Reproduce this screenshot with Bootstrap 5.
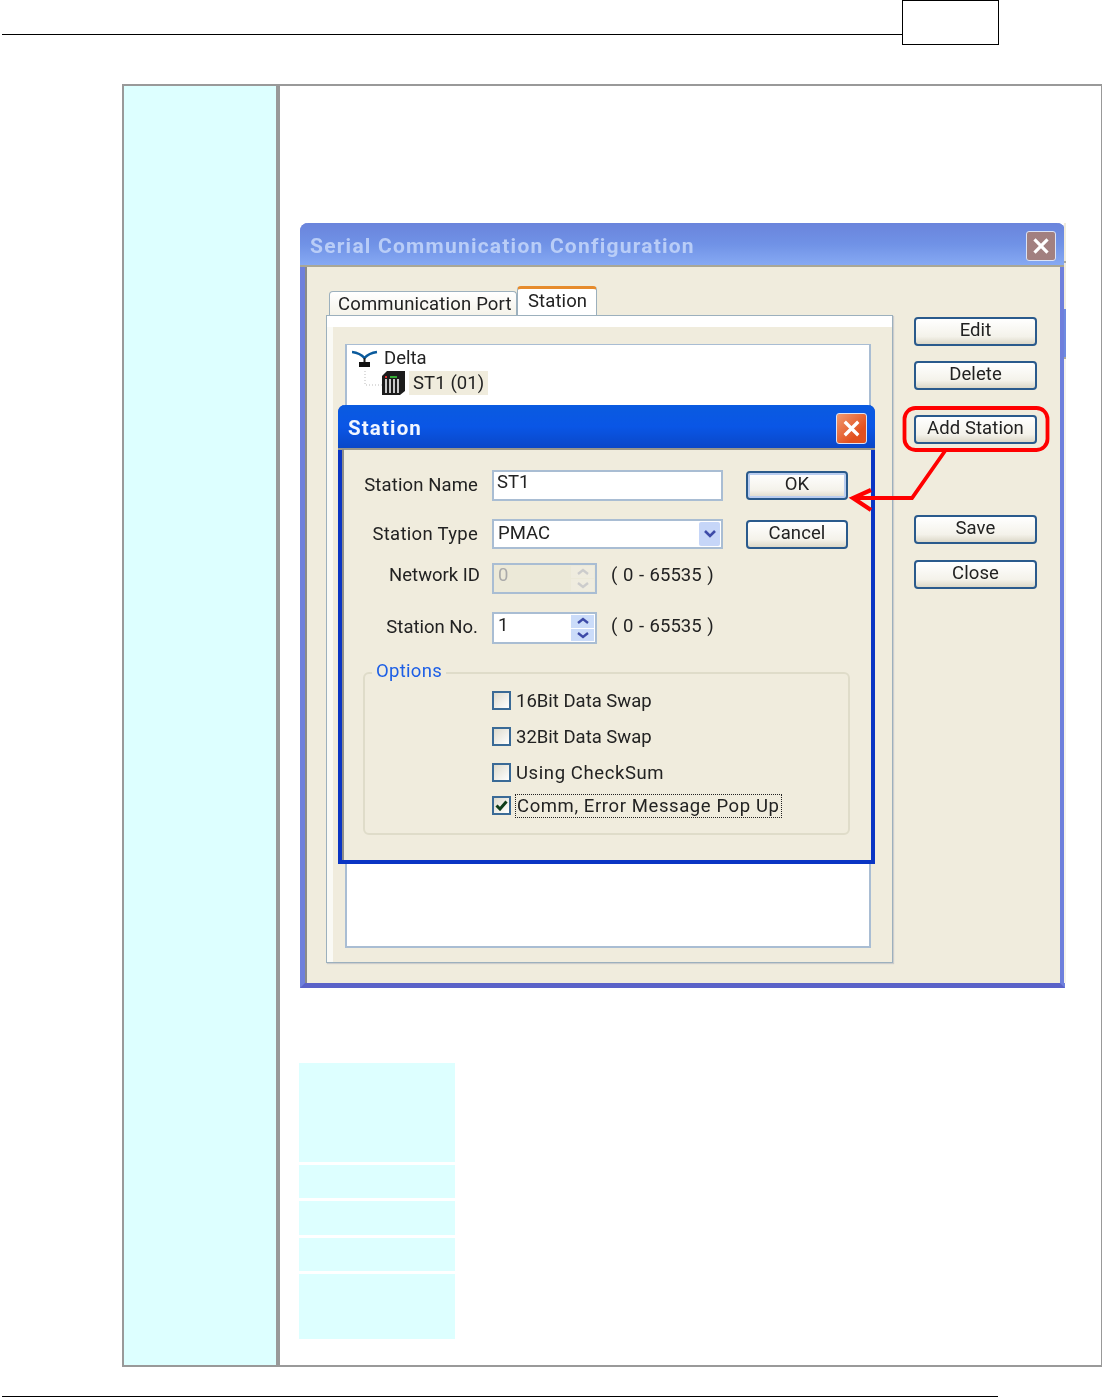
<!DOCTYPE html>
<html lang="en"><head><meta charset="utf-8"><title>Station</title>
<link href="https://cdn.jsdelivr.net/npm/bootstrap@5.3.0/dist/css/bootstrap.min.css" rel="stylesheet">
<style>
html,body{margin:0;background:#fff;}
.pg{width:1102px;height:1397px;position:relative;overflow:hidden;font-family:Roboto,"Liberation Sans",Arial,sans-serif;color:#222;}
.hdr{height:45px;padding-left:2px;}
.hdr-line{width:900px;height:35px;border-bottom:1px solid #000;}
.hdr-box{width:97px;height:45px;border:1px solid #000;}
.tbl{margin:39px 0 0 122px;width:980px;height:1283px;border:2px solid #999;border-right-width:1px;}
.tbl-side{width:152px;background:#dff;flex:none;}
.tbl-main{flex:1;border-left:4px solid #999;padding:137px 0 0 19px;position:relative;}
.foot{position:absolute;left:2px;top:1396px;width:996px;height:1px;background:#000;}
.win{margin-left:1px;width:765px;height:765px;position:relative;background:#f0ecdd;border:5px solid #6e7fdc;border-top:0;border-bottom-color:#5a62c8;border-radius:8px 8px 0 0;filter:blur(.35px);}
.win::before{content:"";position:absolute;left:0;top:44px;bottom:0;width:2px;background:#8a8a88;}
.win-ttl{margin:0 -5px;height:44px;background:linear-gradient(#6a84dc,#7092e6 50%,#86a9f3);border-radius:8px 8px 0 0;border-bottom:2px solid #a9a796;color:#b9cdf7;font-weight:700;font-size:21px;letter-spacing:1.22px;padding:8px 0 0 10px;line-height:30px;}
.strip{position:absolute;left:759px;top:0;width:2px;height:100%;background:linear-gradient(#f0ecdd 0 38px,#a9a9a0 38px 40px,#f0ecdd 40px 86px,#6e8be0 86px 134px,#a9a9a0 134px 136px,#f4f2ea 136px);}
.x-btn{position:absolute;width:31px;height:31px;border:1px solid #dbe3f6;border-radius:3px;}
.x-btn svg{display:block;width:100%;height:100%;}
.x1{left:721px;top:8px;width:30px;height:30px;background:#a28080;}
.x2{left:494px;top:8px;background:linear-gradient(135deg,#f09a70,#e2501e 70%);}
.tabs{position:absolute;left:21px;top:62px;height:31px;display:flex;align-items:flex-end;padding-left:3px;}
.tb{font-size:18.5px;line-height:24px;border:1px solid #9cb0bd;border-bottom:0;border-radius:4px 4px 0 0;background:linear-gradient(#fff,#f4f2e8);white-space:nowrap;}
.tb1{width:188px;height:25px;padding-left:8px;letter-spacing:.18px;}
.tb2{width:80px;height:30px;padding:0 0 0 10px;background:#fff;border-top:3px solid #e68b2c;letter-spacing:.1px;}
.page-f{position:absolute;left:21px;top:92px;width:567px;height:648px;background:#f0ecdd;border:1px solid #9cb0bd;box-shadow:inset 0 11px 0 #fff,inset 6px 0 0 #fafaf5,1px 1px 1px #ccc;}
.tree{position:absolute;left:18px;top:28px;width:526px;height:604px;background:#fff;border:2px solid #a9bdd3;border-width:1px 2px 2px;padding:0 0 0 5px;font-size:18.5px;line-height:24px;}
.tree-r{display:flex;align-items:center;height:24px;}
.tree-hd{height:26px;}
.tree-ic{margin-right:6px;}
.tree-sel{background:#f0ecdd;padding:0 4px;margin-left:3px;letter-spacing:.1px;}
.side-btn{position:absolute;left:609px;width:123px;}
.xbtn{height:29px;border:2px solid #2a5a8c;border-radius:4px;background:linear-gradient(#fff,#f4f2ea 70%,#dcd8c8);font-size:18.5px;line-height:22px;text-align:center;color:#222;padding:0 0 3px;letter-spacing:.08px;}
.dlg-btn{width:102px;margin-left:23px;margin-top:1px;}
.dlg-ok{box-shadow:inset 0 0 0 2px #b9cdf0;}
.dlg{position:absolute;left:33px;top:182px;width:537px;height:459px;background:#f0ecdd;border:4px solid #0a35c4;border-top:0;border-radius:7px 7px 0 0;}
.dlg::before{content:"";position:absolute;left:0;top:44px;bottom:0;width:2px;background:#8e8e8a;}
.dlg-ttl{margin:0 -4px;height:45px;background:linear-gradient(#0a5be0,#0a56e6 50%,#0a47c8);border-radius:7px 7px 0 0;border-bottom:2px solid #99968a;color:#f2f6ff;font-weight:700;font-size:20.5px;padding:9px 0 0 10px;line-height:28px;letter-spacing:1.15px;}
.frow{display:flex;align-items:flex-start;}
.lbl{width:136px;flex:none;text-align:right;font-size:18.5px;white-space:nowrap;letter-spacing:.12px;line-height:24px;padding-top:3px;}
.lbl-t{letter-spacing:.3px;}
.lbl-nid{padding-top:0;width:138px;margin-right:-2px;letter-spacing:0;}
.lbl-no{letter-spacing:0;}
.fld{background:#fff;border:2px solid #a9bdd3;flex:none;margin-left:14px;font-size:18.5px;line-height:24px;padding-left:4px;position:relative;}
.fld-st{line-height:20px;padding-left:3px;}
.fld-nid{line-height:20px;}
.fld-no{line-height:22px;}
.fld.dis{background:#ece9d8;color:#aaa;}
.rng{font-size:18.5px;margin-left:14px;line-height:24px;word-spacing:1px;white-space:nowrap;}
.rng-no{padding-top:2px;}
.spin{position:absolute;right:1px;top:1px;bottom:1px;width:23px;display:flex;flex-direction:column;gap:1px;}
.spin i{flex:1;background:#cbdcf9;display:flex;align-items:center;justify-content:center;}
.dis .spin i{background:#efecdf;}
.spin svg,.drop svg{width:12px;height:8px;}
.drop{position:absolute;right:1px;top:1px;bottom:1px;width:21px;background:#c6d6f8;border-radius:2px;display:flex;align-items:center;justify-content:center;}
.opts{position:absolute;left:21px;top:267px;width:487px;height:163px;border:2px solid #dfdcc9;border-radius:6px;}
.opt-leg{position:absolute;left:7px;top:-15px;background:#f0ecdd;padding:0 4px;color:#1d5fe6;font-size:18.5px;line-height:24px;letter-spacing:.3px;}
.chk{position:absolute;left:127px;display:flex;align-items:center;font-size:18.5px;white-space:nowrap;letter-spacing:.6px;line-height:22px;padding-top:1px;}
.chk-n{letter-spacing:0;}
.c1{top:15px}.c2{top:51px}.c3{top:87px}.c4{top:120px}
.box{width:19px;height:19px;flex:none;border:2px solid #3a6a96;background:linear-gradient(135deg,#dedbcd,#fff);margin:0 5px 2px 0;display:flex;align-items:center;justify-content:center;}
.foc{outline:1px dotted #222;padding:0 1px;}
.anno{position:absolute;left:0;top:0;width:1102px;height:1397px;pointer-events:none;filter:blur(.3px);}
.cy{background:#dff;width:156px;margin-bottom:3px;}
.cy-list{margin-top:75px;}
.h99{height:99px}.h33{height:33px}.h34{height:34px}.h65{height:65px}
.mt20{margin-top:20px}.mt18{margin-top:18px}.mt14{margin-top:14px}
.w231{width:231px}.w105{width:105px}.ht30{height:30px}.ht31{height:31px}.ht32{height:32px}
</style></head><body>
<div class="pg">
<div class="hdr d-flex"><div class="hdr-line"></div><div class="hdr-box"></div></div>
<div class="tbl d-flex">
<div class="tbl-side"></div>
<div class="tbl-main">
 <div class="win">
  <div class="strip"></div>
  <div class="win-ttl">Serial Communication Configuration</div>
  <div class="x-btn x1"><svg viewBox="0 0 30 30"><path d="M8 8L22 22M22 8L8 22" stroke="#fff" stroke-width="3.4"/></svg></div>
  <div class="tabs"><div class="tb tb1">Communication Port</div><div class="tb tb2">Station</div></div>
  <div class="page-f">
   <div class="tree">
    <div class="tree-r tree-hd"><svg width="26" height="24" viewBox="0 0 26 24" class="tree-ic"><path d="M0 6Q8 7 12.500 12Q17 7 25 6" fill="none" stroke="#0a5a9c" stroke-width="2.6"/><path d="M11.500 12h2v5h-2z" fill="#222"/><path d="M7 16h11v5H7z" fill="#111"/></svg><span>Delta</span></div>
    <div class="tree-r"><svg width="54" height="24" viewBox="0 0 54 24"><path d="M13 0V14H30" fill="none" stroke="#bbb" stroke-dasharray="1 2"/><path d="M30 5l5-5h18v20l-5 4H30z" fill="#1c1c1c"/><path d="M33 8h2v14h-2zM37 8h2v14h-2zM41 8h2v14h-2zM45 8h2v14h-2z" fill="#c8c8c8"/><path d="M33 5h2v2h-2z" fill="#d33"/><path d="M38 5h7v2h-7z" fill="#3a3"/></svg><span class="tree-sel">ST1 (01)</span></div>
   </div>
  </div>
  <button class="xbtn side-btn" style="top:94px">Edit</button>
  <button class="xbtn side-btn" style="top:138px">Delete</button>
  <button class="xbtn side-btn" style="top:192px">Add Station</button>
  <button class="xbtn side-btn" style="top:292px">Save</button>
  <button class="xbtn side-btn" style="top:337px">Close</button>
  <div class="dlg">
   <div class="dlg-ttl">Station</div>
   <div class="x-btn x2"><svg viewBox="0 0 30 30"><path d="M8 8L22 22M22 8L8 22" stroke="#fff" stroke-width="3.4"/></svg></div>
   <div class="frow mt20"><div class="lbl">Station Name</div><div class="fld fld-st w231 ht31">ST1</div><button class="xbtn dlg-btn dlg-ok">OK</button></div>
   <div class="frow mt18"><div class="lbl lbl-t">Station Type</div><div class="fld w231 ht30">PMAC<div class="drop"><svg viewBox="0 0 12 8"><path d="M1 1L6 6L11 1" fill="none" stroke="#3d4ba8" stroke-width="2.6"/></svg></div></div><button class="xbtn dlg-btn">Cancel</button></div>
   <div class="frow mt14"><div class="lbl lbl-nid">Network ID</div><div class="fld fld-nid dis w105 ht31">0<div class="spin"><i><svg viewBox="0 0 12 8"><path d="M1 6L6 2L11 6" fill="none" stroke="#ccc" stroke-width="2.4"/></svg></i><i><svg viewBox="0 0 12 8"><path d="M1 2L6 6L11 2" fill="none" stroke="#ccc" stroke-width="2.4"/></svg></i></div></div><div class="rng">( 0 - 65535 )</div></div>
   <div class="frow mt18"><div class="lbl lbl-no">Station No.</div><div class="fld fld-no w105 ht32">1<div class="spin"><i><svg viewBox="0 0 12 8"><path d="M1 6L6 2L11 6" fill="none" stroke="#3d4ba8" stroke-width="2.4"/></svg></i><i><svg viewBox="0 0 12 8"><path d="M1 2L6 6L11 2" fill="none" stroke="#3d4ba8" stroke-width="2.4"/></svg></i></div></div><div class="rng rng-no">( 0 - 65535 )</div></div>
   <div class="opts">
    <div class="opt-leg">Options</div>
    <div class="chk chk-n c1"><span class="box"></span>16Bit Data Swap</div>
    <div class="chk chk-n c2"><span class="box"></span>32Bit Data Swap</div>
    <div class="chk c3"><span class="box"></span>Using CheckSum</div>
    <div class="chk c4"><span class="box"><svg width="13" height="11" viewBox="0 0 13 11"><path d="M1.500 5.500L5 9L11.500 1.500" fill="none" stroke="#0f3d1a" stroke-width="3"/></svg></span><span class="foc">Comm, Error Message Pop Up</span></div>
   </div>
  </div>
 </div>
 <div class="cy-list">
  <div class="cy h99"></div>
  <div class="cy h33"></div>
  <div class="cy h34"></div>
  <div class="cy h33"></div>
  <div class="cy h65"></div>
 </div>
</div>
</div>
<div class="foot"></div>
<svg class="anno" viewBox="0 0 1102 1397"><g fill="none" stroke="#f00" stroke-width="3.8"><rect x="904.500" y="408" width="143" height="42" rx="11"/><path d="M945 451L912 498H855"/><path d="M871 490L853 498L871 510" stroke-width="4.200"/></g></svg>
</div>
<script src="https://cdn.jsdelivr.net/npm/bootstrap@5.3.0/dist/js/bootstrap.bundle.min.js"></script>
</body></html>
